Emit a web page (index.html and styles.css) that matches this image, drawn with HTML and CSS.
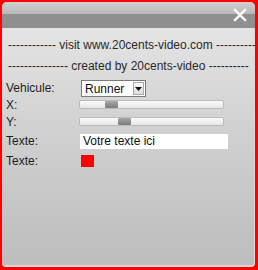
FILE: index.html
```html
<!DOCTYPE html>
<html>
<head>
<meta charset="utf-8">
<link rel="stylesheet" href="styles.css">
</head>
<body>
<div class="frame">
  <div class="panel">
    <div class="titlebar">
      <div class="title-top"></div>
      <div class="title-bottom">
        <svg class="close" width="14" height="14" viewBox="0 0 14 14"><path d="M2 2 L12 12 M12 2 L2 12" stroke="#fff" stroke-width="2.4" stroke-linecap="square"/></svg>
      </div>
    </div>
    <div class="content">
      <div class="line line1">------------ visit www.20cents-video.com ----------</div>
      <div class="line line2">--------------- created by 20cents-video ----------</div>
      <div class="form">
        <div class="label">Vehicule:</div>
        <div class="ctrl"><div class="select"><span class="sel-text">Runner</span><span class="sel-btn"><svg width="7" height="4" viewBox="0 0 7 4"><path d="M0 0 H7 L3.5 4 Z" fill="#111"/></svg></span></div></div>
        <div class="label">X:</div>
        <div class="ctrl"><div class="slider"><div class="thumb thumb-x"></div></div></div>
        <div class="label">Y:</div>
        <div class="ctrl"><div class="slider"><div class="thumb thumb-y"></div></div></div>
        <div class="label">Texte:</div>
        <div class="ctrl"><div class="input">Votre texte ici</div></div>
        <div class="label">Texte:</div>
        <div class="ctrl"><div class="swatch"></div></div>
      </div>
    </div>
  </div>
</div>
</body>
</html>
```
FILE: styles.css
```css
html, body {
  margin: 0;
  padding: 0;
  background: #ffffff;
}
.frame {
  width: 258px;
  height: 270px;
  box-sizing: border-box;
  border-style: solid;
  border-color: #ff0000;
  border-width: 2px 3px 3px 2px;
  background: #ff0000;
  font-family: "Liberation Sans", Arial, sans-serif;
  font-size: 12px;
  color: #222;
}
.panel {
  height: 100%;
  display: flex;
  flex-direction: column;
  background: #c9c9c9;
  border-radius: 5px 5px 4px 4px;
  overflow: hidden;
}
.titlebar {
  height: 26px;
  display: flex;
  flex-direction: column;
  flex: none;
}
.title-top {
  height: 12px;
  background: linear-gradient(#cfcfcf, #b9b9b9);
}
.title-bottom {
  height: 14px;
  background: #8f8f8f;
  display: flex;
  justify-content: flex-end;
  align-items: flex-start;
  padding-right: 8px;
}
.close {
  margin-top: -6px;
}
.content {
  flex: 1;
  background: linear-gradient(#e4e4e4 0%, #d2d2d2 40%, #bdbdbd 100%);
  border-right: 1px solid #d8d8d8;
  border-bottom: 2px solid #d9d9d9;
  border-radius: 0 0 4px 4px;
  padding-top: 7px;
}
.line {
  white-space: nowrap;
  padding-left: 6px;
  height: 20px;
  line-height: 20px;
  color: #2a2a2a;
}
.line2 {
  margin-top: 1px;
}
.form {
  margin-top: 3px;
  padding-left: 4px;
  display: grid;
  grid-template-columns: 73px 1fr;
  grid-template-rows: 18px 15px 19px 20px 20px;
  align-items: center;
}
.label {
  color: #1e1e1e;
}
.select {
  width: 65px;
  height: 17px;
  box-sizing: border-box;
  margin-left: 2px;
  margin-top: 1px;
  background: #fff;
  border: 1px solid #7a7a7a;
  display: flex;
  align-items: center;
  justify-content: space-between;
  padding-left: 3px;
}
.sel-text {
  color: #111;
}
.sel-btn {
  width: 11px;
  height: 13px;
  margin-right: 1px;
  box-sizing: border-box;
  border: 1px solid #aaa;
  background: linear-gradient(#fafafa, #dcdcdc);
  display: flex;
  align-items: center;
  justify-content: center;
}
.slider {
  position: relative;
  width: 145px;
  height: 9px;
  box-sizing: border-box;
  border: 1px solid #bbb;
  border-radius: 2px;
  background: linear-gradient(#fbfbfb, #e6e6e6);
}
.thumb {
  position: absolute;
  top: 0;
  width: 13px;
  height: 7px;
  background: linear-gradient(#a8a8a8, #7c7c7c);
  border-radius: 1px;
}
.thumb-x {
  left: 25px;
}
.thumb-y {
  left: 38px;
}
.input {
  width: 148px;
  height: 15px;
  box-sizing: border-box;
  margin-left: 1px;
  background: #fff;
  padding-left: 3px;
  line-height: 15px;
  color: #111;
}
.swatch {
  width: 13px;
  height: 12px;
  margin-left: 2px;
  background: #ff0000;
}
```
